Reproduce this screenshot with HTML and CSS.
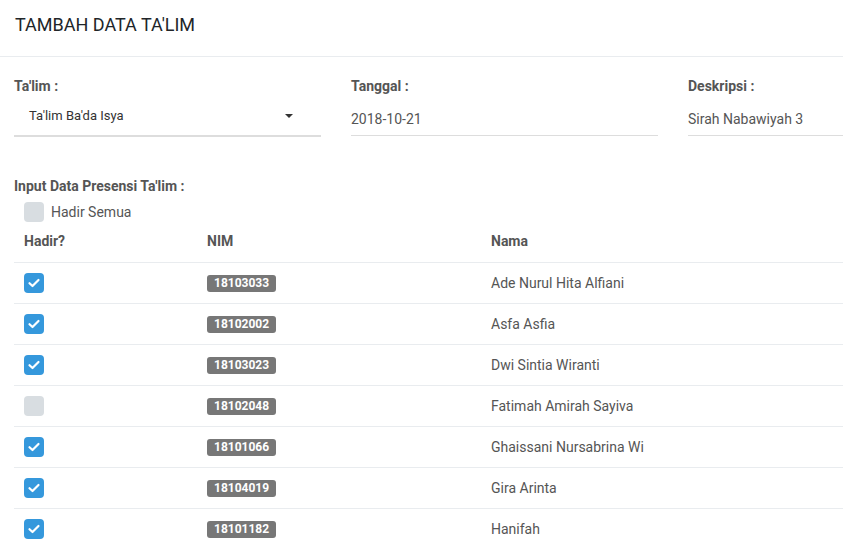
FILE: index.html
```html
<!DOCTYPE html>
<html lang="id">
<head>
<meta charset="utf-8">
<title>Tambah Data Ta'lim</title>
<link rel="stylesheet" href="styles.css">
</head>
<body>
<div class="page">
  <div class="header">TAMBAH DATA TA'LIM</div>
  <div class="content">
    <div class="fields">
      <div class="field">
        <div class="label">Ta'lim :</div>
        <div class="select"><span>Ta'lim Ba'da Isya</span><span class="caret"></span></div>
      </div>
      <div class="field">
        <div class="label">Tanggal :</div>
        <div class="input">2018-10-21</div>
      </div>
      <div class="field">
        <div class="label">Deskripsi :</div>
        <div class="input">Sirah Nabawiyah 3</div>
      </div>
    </div>

    <div class="section-label">Input Data Presensi Ta'lim :</div>
    <div class="all">
      <span class="cb"></span><span class="all-text">Hadir Semua</span>
    </div>

    <table class="tbl">
      <thead>
        <tr><th class="c1">Hadir?</th><th class="c2">NIM</th><th>Nama</th></tr>
      </thead>
      <tbody>
        <tr><td><span class="cb on"><svg viewBox="0 0 20 20"><path d="M5.5 10.2l3 2.8 6-6"/></svg></span></td><td><span class="badge">18103033</span></td><td>Ade Nurul Hita Alfiani</td></tr>
        <tr><td><span class="cb on"><svg viewBox="0 0 20 20"><path d="M5.5 10.2l3 2.8 6-6"/></svg></span></td><td><span class="badge">18102002</span></td><td>Asfa Asfia</td></tr>
        <tr><td><span class="cb on"><svg viewBox="0 0 20 20"><path d="M5.5 10.2l3 2.8 6-6"/></svg></span></td><td><span class="badge">18103023</span></td><td>Dwi Sintia Wiranti</td></tr>
        <tr><td><span class="cb"></span></td><td><span class="badge">18102048</span></td><td>Fatimah Amirah Sayiva</td></tr>
        <tr><td><span class="cb on"><svg viewBox="0 0 20 20"><path d="M5.5 10.2l3 2.8 6-6"/></svg></span></td><td><span class="badge">18101066</span></td><td>Ghaissani Nursabrina Wi</td></tr>
        <tr><td><span class="cb on"><svg viewBox="0 0 20 20"><path d="M5.5 10.2l3 2.8 6-6"/></svg></span></td><td><span class="badge">18104019</span></td><td>Gira Arinta</td></tr>
        <tr><td><span class="cb on"><svg viewBox="0 0 20 20"><path d="M5.5 10.2l3 2.8 6-6"/></svg></span></td><td><span class="badge">18101182</span></td><td>Hanifah</td></tr>
      </tbody>
    </table>
  </div>
</div>
</body>
</html>
```

FILE: styles.css
```css
html, body {
  margin: 0;
  padding: 0;
  overflow: hidden;
  background: #fff;
}
body {
  font-family: Roboto, "Liberation Sans", Arial, sans-serif;
  color: #555;
  font-size: 14px;
}
.page {
  width: 100%;
}
.header {
  padding: 13px 15px 19px;
  font-size: 18px;
  line-height: 24px;
  color: #212529;
  border-bottom: 1px solid #e9ecef;
}
.content {
  padding: 19px 0 0 14px;
}
.fields {
  display: grid;
  grid-template-columns: 307px 307px 1fr;
  column-gap: 30px;
}
.label {
  font-weight: 700;
  line-height: 20px;
  color: #555;
}
.select {
  height: 39px;
  border-bottom: 2px solid #ddd;
  display: flex;
  align-items: center;
  justify-content: space-between;
  padding: 0 28px 0 15px;
  font-size: 13px;
  color: #333;
}
.caret {
  width: 0;
  height: 0;
  border-left: 4px solid transparent;
  border-right: 4px solid transparent;
  border-top: 4px solid #333;
  margin-top: 1px;
}
.input {
  height: 40px;
  box-sizing: border-box;
  padding-top: 13px;
  line-height: 20px;
  border-bottom: 1px solid #ddd;
  color: #555;
  white-space: nowrap;
}
.section-label {
  margin-top: 39px;
  font-weight: 700;
  line-height: 20px;
}
.all {
  display: flex;
  align-items: center;
  gap: 7px;
  padding-left: 10px;
  margin-top: 6px;
  height: 20px;
}
.all-text {
  line-height: 20px;
}
.cb {
  display: inline-block;
  width: 20px;
  height: 20px;
  border-radius: 4px;
  background: #d8dde1;
  vertical-align: middle;
}
.cb.on {
  background: #3598dc;
}
.cb svg {
  display: block;
  width: 20px;
  height: 20px;
}
.cb svg path {
  fill: none;
  stroke: #fff;
  stroke-width: 2.2;
  stroke-linecap: round;
  stroke-linejoin: round;
}
.tbl {
  margin-top: -1px;
  width: 100%;
  border-collapse: collapse;
}
.tbl th {
  text-align: left;
  font-weight: 700;
  height: 41px;
  box-sizing: border-box;
  padding: 0 10px;
  border-bottom: 1px solid #e9ecef;
  line-height: 20px;
  vertical-align: middle;
}
.tbl th.c1 { width: 183px; }
.tbl th.c2 { width: 284px; }
.tbl td {
  height: 41px;
  box-sizing: border-box;
  padding: 0 10px;
  border-bottom: 1px solid #e9ecef;
  line-height: 20px;
  vertical-align: middle;
}
.tbl td .cb {
  display: block;
}
.badge {
  display: inline-block;
  background: #777;
  color: #fff;
  font-weight: 700;
  font-size: 12px;
  line-height: 17px;
  padding: 0 7px;
  border-radius: 3px;
  vertical-align: middle;
}
```
